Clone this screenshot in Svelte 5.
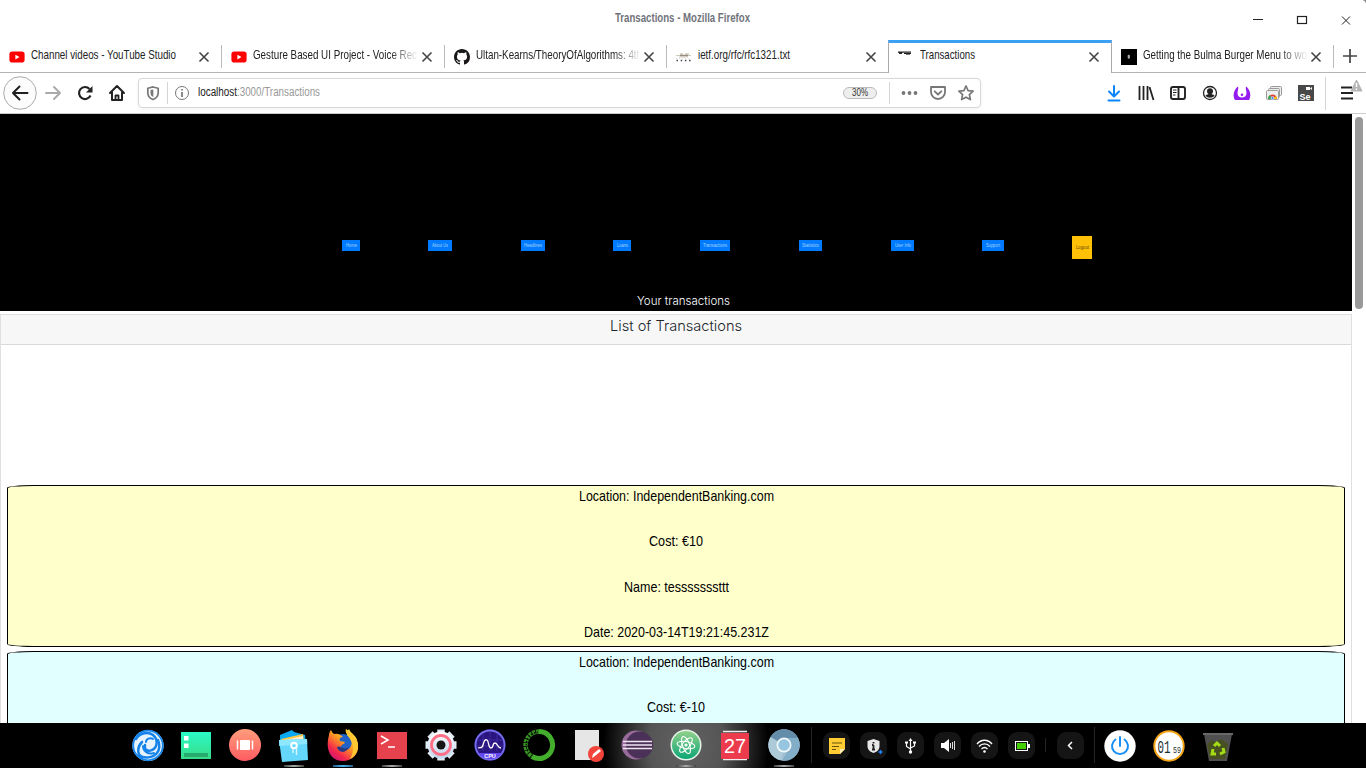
<script>
  const tabs = [
    { title: 'Channel videos - YouTube Studio', w: 145, icon: 'yt' },
    { title: 'Gesture Based UI Project - Voice Rec', w: 164, icon: 'yt', fade: true },
    { title: 'Ultan-Kearns/TheoryOfAlgorithms: 4th', w: 166, icon: 'gh', fade: true },
    { title: 'ietf.org/rfc/rfc1321.txt', w: 92, icon: 'ietf' },
    { title: 'Transactions', w: 55, icon: 'tx', active: true },
    { title: 'Getting the Bulma Burger Menu to wo', w: 164, icon: 'bulma', fade: true }
  ];
  const nav = [
    { t: 'Home', w: 18, tw: 11, gap: 0 }, { t: 'About Us', w: 24, tw: 16, gap: 68 }, { t: 'Headlines', w: 24, tw: 18, gap: 69 },
    { t: 'Loans', w: 18, tw: 11, gap: 68 }, { t: 'Transactions', w: 30, tw: 24, gap: 69 }, { t: 'Statistics', w: 23, tw: 17, gap: 69 },
    { t: 'User Info', w: 23, tw: 16, gap: 69 }, { t: 'Support', w: 22, tw: 14, gap: 68 }
  ];
  const rows = [
    [['Location: IndependentBanking.com', 195], ['Cost: €10', 54], ['Name: te' + 's'.repeat(7) + 'ttt', 105], ['Date: 2020-03-14T19:21:45.231Z', 185]],
    [['Location: IndependentBanking.com', 195], ['Cost: €-10', 58]]
  ];
  const apps = ['deepin', 'multi', 'store', 'files', 'firefox', 'term', 'gear', 'cpu', 'conda', 'edit', 'eclipse', 'atom', 'cal', 'chromium'];
  const running = { files: 'grey', firefox: 'blue', term: 'grey', atom: 'grey', chromium: 'grey' };
  const tray = ['note', 'shield', 'usb', 'sound', 'wifi', 'battery'];
</script>

{#snippet label(text, w, h, base, cls)}
  <svg class="label {cls}" width={w} height={h}><text x="0" y={base} textLength={w} lengthAdjust="spacingAndGlyphs">{text}</text></svg>
{/snippet}

{#snippet cross()}
  <svg class="cross" width="12" height="12" viewBox="0 0 12 12"><path d="M1.5 1.5l9 9M10.5 1.5l-9 9" /></svg>
{/snippet}

{#snippet favicon(k)}
  <svg width="16" height="16" viewBox="0 0 16 16">
    {#if k === 'yt'}
      <rect x="0.4" y="2.6" width="15.2" height="11" rx="2.8" fill="#f00" /><path d="M6.4 5.8v4.6L10.5 8.1z" fill="#fff" />
    {:else if k === 'gh'}
      <path fill="#191717" d="M8 0C3.58 0 0 3.58 0 8c0 3.54 2.29 6.53 5.47 7.59.4.07.55-.17.55-.38 0-.19-.01-.82-.01-1.49-2.01.37-2.53-.49-2.69-.94-.09-.23-.48-.94-.82-1.13-.28-.15-.68-.52-.01-.53.63-.01 1.08.58 1.23.82.72 1.21 1.87.87 2.33.66.07-.52.28-.87.51-1.07-1.78-.2-3.64-.89-3.64-3.95 0-.87.31-1.59.82-2.15-.08-.2-.36-1.02.08-2.12 0 0 .67-.21 2.2.82a7.6 7.6 0 0 1 4 0c1.53-1.04 2.2-.82 2.2-.82.44 1.1.16 1.92.08 2.12.51.56.82 1.27.82 2.15 0 3.07-1.87 3.75-3.65 3.95.29.25.54.73.54 1.48 0 1.07-.01 1.93-.01 2.2 0 .21.15.46.55.38A8.01 8.01 0 0 0 16 8c0-4.42-3.58-8-8-8z" />
    {:else if k === 'ietf'}
      <path d="M0 6.5h15M3 8h9" stroke="#cfc9bb" stroke-width="1.2" /><path d="M4 5h3M9 5h4" stroke="#b7b0a0" /><path d="M4 6.500h8" stroke="#978e7e" stroke-width="1.500" />
      <path d="M.5 11.5h15" stroke="#444" stroke-width="1.5" stroke-dasharray="1.5 2.7" /><path d="M0 9.7h15" stroke="#ddd" stroke-dasharray="1 2" />
    {:else if k === 'tx'}
      <path d="M0 3.200h13M1 4.300h3M6 4.500h7" stroke="#222" stroke-width="1.200" /><path d="M8 5.500h4" stroke="#777" />
    {:else}
      <rect width="16" height="16" fill="#000" /><rect x="6.700" y="5.800" width="2.200" height="4" rx="1" fill="#aaa" />
    {/if}
  </svg>
{/snippet}

{#snippet app(k)}
  <svg class="app" width="34" height="36" viewBox="0 0 34 36">
    {#if k === 'deepin'}
      <g transform="translate(1 0)"><circle cx="17" cy="17.500" r="15.6" fill="#e7f3ff" /><circle cx="17" cy="17.500" r="14.8" fill="none" stroke="#1686ec" stroke-width="1.8" />
      <g fill="none" stroke="#1583e9" stroke-width="2.5" stroke-linecap="round">
        <path d="M5 11c4-6 12-8 17-4 6 5 4 13-1 15-4 2-8 0-7-5" /><path d="M11 30c-6-5-4-12 0-16" /><path d="M8 27c5 4 14 3 18-2 3-4 3-8 1-13" /><path d="M15 14c0-3 4-5 7-3M12 18c0 5 5 9 11 7" stroke-width="2" />
      </g></g>
    {:else if k === 'multi'}
      <defs><linearGradient id="mg" x2="0" y2="1"><stop stop-color="#2bfac7" /><stop offset="1" stop-color="#37dc86" /></linearGradient></defs>
      <rect x="2" y="4" width="30" height="27" fill="url(#mg)" /><path d="M5 8h4.5v4.500H5zM5 15.500h4.500v4.500H5z" fill="#fff" /><rect x="5" y="25" width="24" height="4" fill="#27ab6c" />
    {:else if k === 'store'}
      <defs><linearGradient id="sg" x2="0" y2="1"><stop stop-color="#ff9d7d" /><stop offset="1" stop-color="#ff5c60" /></linearGradient></defs>
      <circle cx="17" cy="17" r="16" fill="url(#sg)" /><rect x="12" y="12" width="10" height="10" rx=".7" fill="#fff" /><path d="M9.500 12.500v9M24.500 12.500v9" stroke="#fff" stroke-width="1.500" />
    {:else if k === 'files'}
      <path d="M3 7L15 2l2 2 11 3 1 10H3z" fill="#0aa9f3" /><path d="M4 11l22-5 1 7H5z" fill="#ffc843" /><path d="M4 13l22-5v5z" fill="#fff1d0" />
      <path d="M2 12l28-1 1 21-26 2z" fill="#65d7fa" /><path d="M2 12l28-1 .2 5-28 2z" fill="#8de8ff" />
      <circle cx="17" cy="17.500" r="2.800" fill="none" stroke="#fff" stroke-width="2" /><path d="M16 21v4M19.500 20v7" stroke="#d3f5ff" stroke-width="1.500" />
    {:else if k === 'firefox'}
      <defs><linearGradient id="fg" x1=".9" x2=".15" y2="1"><stop stop-color="#fff14d" /><stop offset=".45" stop-color="#ff9b22" /><stop offset=".75" stop-color="#f3284c" /><stop offset="1" stop-color="#c7107c" /></linearGradient></defs>
      <circle cx="17" cy="18" r="12" fill="#2062c8" /><path d="M3 7c0-2 1-4 2-5 1 2 2 4 4 4 3-1 6 1 8 3-3 0-4 2-3 4l5 1c-1 3-4 2-4 5 1 4 8 4 10-1 2-5-1-9-4-11 0-3 1-5 2-6 2 5 7 6 8 11 4 12-3 21-14 21C4 33-1 21 3 7z" fill="url(#fg)" />
      <path d="M20 1c6 4 13 10 12 19-1 5-4 9-8 11 5-9 4-15-2-23-2-3-3-5-2-7z" fill="#ffc833" />
      <path d="M11 19c4-2 6 4 12 0-2 6-10 7-12 0z" fill="#273a87" />
    {:else if k === 'term'}
      <rect x="2" y="4" width="30" height="27" fill="#e5424e" /><path d="M6 8l7 4-7 4M13 19h7" fill="none" stroke="#fff" stroke-width="1.500" />
    {:else if k === 'gear'}
      <defs><linearGradient id="gg" x2="0" y2="1"><stop stop-color="#fff" /><stop offset="1" stop-color="#bed5ec" /></linearGradient></defs>
      <g stroke="#dfeaf5" stroke-width="7.500"><path d="M17 1.500v31M1.500 17h31M6 6l22 22M6 28L28 6" /></g><circle cx="17" cy="17" r="13.500" fill="url(#gg)" /><circle cx="17" cy="17" r="9.500" fill="none" stroke="#ff7088" stroke-width="2.800" /><circle cx="17" cy="17" r="4.500" fill="#151515" />
    {:else if k === 'cpu'}
      <circle cx="17" cy="17" r="15.700" fill="#291480" /><circle cx="17" cy="17" r="14.500" fill="none" stroke="#7670ec" stroke-width="1.800" /><path d="M5 25a15 15 0 0 0 24 0z" fill="#6545ed" /><path d="M17 3v20M10 5v18M24 5v18M4 12h26M4 18h26" stroke="#4730a8" stroke-width=".7" />
      <path d="M5 20c3-1 4 1 5-3s2-6 4-5 1 8 4 8 1-5 4-5 2 5 6 5" fill="none" stroke="#fff" stroke-width="1.300" /><text x="17" y="29.500" text-anchor="middle" font-size="5.500" font-weight="bold" fill="#fff">CPU</text>
    {:else if k === 'conda'}
      <path d="M17 3.500a13.500 13.500 0 1 1-7 25" fill="none" stroke="#43ae2c" stroke-width="5" /><path d="M17 3.500a13.500 13.500 0 0 0-7 25" fill="none" stroke="#379323" stroke-width="4.500" stroke-dasharray="3 .8" /><path d="M16 4a13 13 0 0 0-9 21" fill="none" stroke="#050505" stroke-width="1.200" stroke-dasharray="1.500 1.500" />
    {:else if k === 'edit'}
      <rect x="4" y="2" width="24" height="30" fill="#e6e6e6" /><circle cx="25" cy="26" r="8" fill="#f2443b" /><path d="M21 30l1-4 6-5 2 2-6 5z" fill="#fff" />
    {:else if k === 'eclipse'}
      <circle cx="16" cy="17" r="14.500" fill="#976b9a" /><circle cx="19.500" cy="17" r="13.500" fill="#4b3158" /><path d="M3 13.500h29M3 17h29M3 20.500h29" stroke="#efe5f0" stroke-width="1.600" />
    {:else if k === 'atom'}
      <defs><linearGradient id="ag" x2="0" y2="1"><stop stop-color="#92d18b" /><stop offset="1" stop-color="#0ca675" /></linearGradient></defs>
      <circle cx="17" cy="17" r="15.500" fill="#e7f3e8" /><circle cx="17" cy="17" r="14" fill="url(#ag)" /><g fill="none" stroke="#fff" stroke-width="1.100"><ellipse cx="17" cy="17" rx="3.500" ry="9" transform="rotate(-20 17 17)" /><ellipse cx="17" cy="17" rx="3.500" ry="9" transform="rotate(40 17 17)" /><ellipse cx="17" cy="17" rx="3.500" ry="9" transform="rotate(100 17 17)" /></g><circle cx="17" cy="17" r="1.600" fill="#fff" />
    {:else if k === 'cal'}
      <path d="M5 3.500h24M5 31.500h24" stroke="#eee" stroke-width="1.300" /><rect x="3" y="5" width="28" height="26" fill="#ec3b4c" /><text x="17" y="24.500" text-anchor="middle" font-size="20" textLength="22" lengthAdjust="spacingAndGlyphs" fill="#fff">27</text>
    {:else}
      <circle cx="17" cy="17" r="15.700" fill="#9fbed2" /><path d="M17 17L3.500 9a15.700 15.700 0 0 1 27 0z" fill="#648dab" /><path d="M17 17L3.500 9a15.700 15.700 0 0 0 11 23.500z" fill="#adcad9" /><path d="M18 10h13a15.700 15.700 0 0 1-16 22.700l7-12z" fill="#83aeca" /><circle cx="17" cy="17" r="7.500" fill="#f2f7fa" /><circle cx="17" cy="17" r="5.800" fill="#95c5df" />
    {/if}
  </svg>
{/snippet}

{#snippet trayIcon(k)}
  <svg width="27" height="27" viewBox="0 0 27 27" fill="none" stroke="#fff">
    {#if k === 'note'}
      <path d="M6 6h16v11l-5 5H6z" fill="#ffcc33" stroke="none" /><path d="M17 22v-5h5z" fill="#fff0b1" stroke="none" /><path d="M9 11h10M9 14.500h7M9 17.500h4" stroke="#6b5209" />
    {:else if k === 'shield'}
      <path d="M13.500 7l6 2v5c0 4-3 6-6 7-3-1-6-3-6-7V9z" fill="#e7e7e7" stroke="none" /><path d="M13.500 10v1.500M13.500 13v4M12 13h1.500M12 17.500h3" stroke="#222" stroke-width="1.800" /><path d="M20.500 18v4M18.500 20h4" stroke="#2483ff" stroke-width="1.500" />
    {:else if k === 'usb'}
      <path d="M13.500 8v12M9.500 11v3.500l4 2.500M17.500 11v3l-4 2" stroke-width="1.200" /><path d="M11.500 9l2-3 2 3z" fill="#fff" stroke="none" /><circle cx="13.500" cy="20" r="1.700" fill="#fff" stroke="none" /><path d="M8 9.500h3v2H8zM16 9.500h3v2h-3z" fill="#fff" stroke="none" />
    {:else if k === 'sound'}
      <path d="M7 11h3l5-4v13l-5-4H7z" fill="#fff" stroke="none" /><path d="M16.500 11v5M18.500 10v7M20.500 9v9" stroke="#ddd" />
    {:else if k === 'wifi'}
      <path d="M6 12c4-5 11-5 15 0M8 14.500c3-3.500 8-3.500 11 0M10.500 17c2-2 4-2 6 0" stroke-width="1.300" /><circle cx="13.500" cy="19.500" r="1.300" fill="#fff" stroke="none" />
    {:else}
      <rect x="7.500" y="9.500" width="12" height="9" /><path d="M21 12v4" stroke-width="2" /><rect x="9" y="11" width="9" height="6" fill="#45ce00" stroke="none" />
    {/if}
  </svg>
{/snippet}

<div class="screen">
  <header class="titlebar">
    <div class="caption">{@render label('Transactions - Mozilla Firefox', 135, 18, 13, 'title')}</div>
    <svg class="winbtns" width="110" height="20" viewBox="0 0 110 20" fill="none" stroke="#222"><path d="M1 9.500h10" /><rect x="45.500" y="6.500" width="9" height="7" stroke-width="1.200" /><path d="M90 6.500l8 8M98 6.500l-8 8" /></svg>
    <i class="corner"></i>
  </header>

  <div class="tabs">
    {#each tabs as t}
      <div class="tab" class:active={t.active}>
        <span class="fav">{@render favicon(t.icon)}</span>
        <span class="tabtext" class:fade={t.fade}>{@render label(t.title, t.w, 20, 13, 'tabfont')}</span>
        {@render cross()}
      </div>
    {/each}
    <div class="newtab"><svg width="14" height="14" viewBox="0 0 14 14"><path d="M7 0v14M0 7h14" stroke="#444" stroke-width="1.700" /></svg></div>
  </div>

  <div class="toolbar">
    <svg width="34" height="34" viewBox="0 0 34 34" fill="none"><circle cx="17" cy="17" r="16.300" fill="#fcfcfc" stroke="#aaa" /><path d="M24.500 17H10M16.500 10.500L10 17l6.500 6.500" stroke="#1f1f1f" stroke-width="2" stroke-linecap="round" stroke-linejoin="round" /></svg>
    <svg width="32" height="32" viewBox="0 0 32 32" fill="none" stroke="#aaa" stroke-width="2" stroke-linecap="round" stroke-linejoin="round"><path d="M9 16h14M17 10l6 6-6 6" /></svg>
    <svg width="32" height="32" viewBox="0 0 32 32" fill="none" stroke="#222" stroke-width="2.200"><path d="M21.500 18.500a6 6 0 1 1-1-6.500" /><path d="M23.500 9v6.500h-6.500z" fill="#222" stroke="none" /></svg>
    <svg width="32" height="32" viewBox="0 0 32 32" fill="none" stroke="#222" stroke-width="2" stroke-linejoin="round" stroke-linecap="round"><path d="M9 16l7-7 7 7M11 15.500V23h10v-7.500" /><path d="M14.500 23v-4.500h3V23" stroke-width="1.800" /></svg>
    <div class="urlbar">
      <svg width="28" height="28" viewBox="0 0 28 28" fill="none" stroke="#777" stroke-width="1.700"><path d="M14 8l5.200 1.300V14c0 3.500-2.500 5.500-5.200 6.500-2.700-1-5.200-3-5.200-6.500V9.300z" /><path d="M14.300 10.500v7.500c-2-1-2.800-2-2.800-4v-3z" fill="#777" stroke="none" /></svg>
      <i class="sep s1"></i>
      <svg width="28" height="28" viewBox="0 0 28 28" fill="none" stroke="#777"><circle cx="14" cy="14" r="6.500" /><path d="M14 10v1.500M14 13v5" stroke-width="1.700" /></svg>
      <span class="url">{@render label('localhost', 39, 18, 13, 'host')}{@render label(':3000/Transactions', 83, 18, 13, 'path')}</span>
      <span class="zoom">{@render label('30%', 16, 10, 8, 'zoomfont')}</span>
      <i class="sep s2"></i>
      <svg class="dots" width="18" height="6" viewBox="0 0 18 6" fill="#777"><circle cx="3.500" cy="3" r="1.900" /><circle cx="9.500" cy="3" r="1.900" /><circle cx="15.500" cy="3" r="1.900" /></svg>
      <svg class="pocket" width="18" height="18" viewBox="0 0 18 18" fill="none" stroke="#777" stroke-width="1.800" stroke-linejoin="round" stroke-linecap="round"><path d="M2 3h14v5a7 7 0 0 1-14 0z" /><path d="M5.700 7.300L9 10.500l3.300-3.200" /></svg>
      <svg class="star" width="18" height="18" viewBox="0 0 18 18" fill="none" stroke="#777" stroke-width="1.700" stroke-linejoin="round"><path d="M9 2l2.100 4.600 5 .6-3.700 3.400 1 5L9 13.200l-4.400 2.400 1-5L1.900 7.200l5-.6z" /></svg>
    </div>
    <div class="tools">
      <svg viewBox="0 0 32 32" stroke="#0a84ff" fill="none" stroke-width="2" stroke-linecap="round" stroke-linejoin="round"><path d="M16 9v10M11 14.500l5 5 5-5M10.500 23.500h11" /></svg>
      <svg viewBox="0 0 32 32" stroke="#222" fill="none" stroke-width="1.800"><path d="M9.500 9v14M13.500 9v14M17.500 9v14M19.500 10l4 13" /></svg>
      <svg viewBox="0 0 32 32" stroke="#222" fill="none" stroke-width="1.900"><rect x="9" y="10" width="14" height="12" rx="2" /><path d="M16.500 10v12" /><path d="M11 13h3.500M11 15.500h3.500M11 18h2.500" stroke-width="1" /></svg>
      <svg viewBox="0 0 32 32" fill="#222"><circle cx="16" cy="16" r="6.500" fill="none" stroke="#222" stroke-width="1.300" /><circle cx="16" cy="14.300" r="3" /><path d="M11.500 18.500c2-2 7-2 9 0-2 3-7 3-9 0z" /></svg>
      <svg viewBox="0 0 32 32" fill="#951cf0"><path d="M12 9.500c-4.500 3-5.500 10-3 13.500h14c2.500-3.500 1.500-10.500-3-13.500-.8 2 .5 4.500.5 6.500 0 3-2 4.500-4.500 4.500s-4.500-1.500-4.500-4.500c0-2 1.300-4.500.5-6.500z" /><circle cx="16" cy="17.800" r="1.300" /></svg>
      <svg viewBox="0 0 32 32" fill="#eee" stroke="#999"><rect x="12.500" y="9.500" width="11" height="9" rx="1" /><rect x="10.500" y="11.500" width="11" height="9" rx="1" /><rect x="8.500" y="13.500" width="12" height="9" rx="1" /><path d="M10 22a4.500 4.500 0 0 1 9 0z" fill="#e34133" stroke="none" /><path d="M10 22a4.500 4.500 0 0 1 2-4l2.500 4z" fill="#36a853" stroke="none" /><path d="M19 22a4.500 4.500 0 0 0-1-3l-3.500 3z" fill="#fbbc05" stroke="none" /><circle cx="14.500" cy="21" r="1.500" fill="#4285f4" stroke="#fff" stroke-width=".6" /></svg>
      <svg viewBox="0 0 32 32"><rect x="8" y="8" width="16" height="16" fill="#484848" /><text x="9.500" y="22.500" font-size="9.500" font-weight="bold" textLength="11" lengthAdjust="spacingAndGlyphs" fill="#fff">Se</text><rect x="16" y="10" width="4" height="3" fill="#fff" /><path d="M20 11.500l2-1.500v3z" fill="#fff" /></svg>
    </div>
    <i class="sep s3"></i>
    <svg class="menu" width="40" height="34" viewBox="0 0 40 34"><path d="M15 11.500h11M15 17h12M15 22.500h12" stroke="#222" stroke-width="2" /><path d="M30.500 4l5.500 11H25z" fill="#b5b5b5" stroke="#b5b5b5" stroke-linejoin="round" /><path d="M30.500 7v4M30.500 12.500v1.500" stroke="#fff" stroke-width="1.500" /></svg>
  </div>

  <div class="viewport">
    <main>
      <div class="hero">
        <nav>
          {#each nav as n}<span class="btn" style="width:{n.w}px;margin-left:{n.gap}px">{@render label(n.t, n.tw, 6, 3.500, 'navfont')}</span>{/each}
          <span class="btn logout">{@render label('Logout', 13, 6, 3.500, 'outfont')}</span>
        </nav>
        <div class="sub">{@render label('Your transactions', 93, 16, 11, 'subfont')}</div>
      </div>
      <section class="card">
        <div class="cardhead">{@render label('List of Transactions', 132, 20, 16, 'headfont')}</div>
        <div class="list">
          {#each rows as r, i}
            <article class:blue={i % 2 === 1}>
              {#each r as [t, w]}<p>{@render label(t, w, 21, 15, 'rowfont')}</p>{/each}
            </article>
          {/each}
        </div>
      </section>
    </main>
    <aside><i></i></aside>
  </div>

  <footer>
    {#each apps as a}
      <div class="slot">{@render app(a)}{#if running[a]}<i class="run {running[a]}"></i>{/if}</div>
    {/each}
    <i class="dsep d1"></i>
    <div class="tray">{#each tray as t}<div class="tslot"><span class="pill">{@render trayIcon(t)}</span></div>{/each}</div>
    <i class="dsep d2"></i>
    <span class="pill more"><svg width="27" height="27" viewBox="0 0 27 27"><path d="M15 10l-3.500 3.500L15 17" fill="none" stroke="#fff" stroke-width="1.500" /></svg></span>
    <i class="dsep d3"></i>
    <div class="slot"><svg class="app" width="34" height="36" viewBox="0 0 34 36" fill="none" stroke="#198ff5" stroke-width="2"><circle cx="17" cy="18" r="15.700" fill="#fff" stroke="none" /><path d="M17 9v9M12.500 11.500a8 8 0 1 0 9 0" stroke-linecap="round" /></svg></div>
    <div class="slot"><svg class="app" width="34" height="36" viewBox="0 0 34 36"><circle cx="17" cy="18" r="14.700" fill="#fff" stroke="#f5a416" stroke-width="2" /><g class="digits"><text x="5.500" y="24.500" font-size="18" textLength="13" lengthAdjust="spacingAndGlyphs">01</text><text x="21" y="25" font-size="9.500" textLength="8" lengthAdjust="spacingAndGlyphs">59</text></g></svg></div>
    <div class="slot"><svg class="app" width="34" height="36" viewBox="0 0 34 36"><path d="M3 6h28l-5 27H8z" fill="#505050" /><path d="M2 5h30v2H2z" fill="#686868" /><path d="M6 16l5-4 4 2 5-3 7 5-3 15H9z" fill="#465020" /><g fill="none" stroke="#a4dc16" stroke-width="3"><path d="M13 18l3-3 3 3M22 20l1 4-4 2M15 26h-4l1-5" /></g></svg></div>
  </footer>
</div>

<style>
  :global(body) { overflow: hidden; background: #fff; }
  .screen { width: 1366px; height: 768px; display: flex; flex-direction: column; font-family: "Liberation Sans", Arial, sans-serif; background: #fff; overflow: hidden; }
  svg { display: block; flex: none; }
  i { display: block; flex: none; }
  .label { overflow: visible; }
  .titlebar { height: 40px; display: flex; box-sizing: border-box; padding: 9px 0 0 615px; position: relative; }
  .caption { width: 637px; }
  .winbtns { margin-top: 1px; }
  .corner { position: absolute; right: 0; top: 0; width: 3px; height: 3px; background: radial-gradient(circle at 0 100%, #fff 2px, #888 3px); }
  .title { font-size: 12px; font-weight: bold; fill: #71747b; }
  .tabs { height: 33px; display: flex; box-sizing: border-box; background: linear-gradient(#b4b4b4, #b4b4b4) 0 100% / 100% 1px no-repeat; }
  .tab { width: 222.300px; height: 33px; box-sizing: border-box; display: flex; padding: 6px 12px 0 9px; background: linear-gradient(#bbb, #bbb) 100% 5px / 1px 23px no-repeat; }
  .tab.active { background: #fff; border: 1px solid #aaa; border-top: 3px solid #3aa0f4; border-bottom: 0; padding-top: 3px; padding-left: 9px; padding-right: 11px; width: 224px; margin-left: -1px; }
  .tab:nth-child(4) { background: none; }
  .fav { margin: 3px 6px 0 0; }
  .tabtext { flex: 1; min-width: 0; height: 22px; margin-right: 8px; }
  .tabtext.fade { margin-right: 0; flex: 0 0 167px; mask-image: linear-gradient(90deg, #000 82%, transparent 99%); }
  .fade + :global(.cross) { margin-left: auto; }
  .tabfont { font-size: 12.800px; fill: #222; }
  .cross { margin-top: 5px; stroke: #444; stroke-width: 1.600; }
  .newtab { flex: 1; display: flex; padding: 9px 0 0 9px; }
  .toolbar { height: 41px; box-sizing: border-box; border-bottom: 1px solid #ccc; display: flex; align-items: center; padding-left: 3px; }
  .urlbar { box-sizing: border-box; width: 843px; height: 30px; margin-left: 5px; border: 1px solid #d6d6db; border-radius: 4px; display: flex; align-items: center; box-shadow: 0 1px 4px #0000000d; }
  .sep { width: 1px; height: 22px; background: #d5d5d5; }
  .url { width: 645px; margin-left: 2px; height: 20px; display: flex; }
  .url .label { font-size: 12.300px; }
  .host { fill: #222; }
  .path { fill: #999; }
  .zoom { box-sizing: border-box; width: 34px; height: 12px; border: 1px solid #bbb; border-radius: 6px; background: #eee; display: flex; justify-content: center; align-items: flex-start; }
  .zoomfont { font-size: 10px; fill: #333; }
  .s2 { margin-left: 12px; }
  .dots { margin-left: 10px; }
  .pocket { margin-left: 11px; }
  .star { margin-left: 10px; }
  .tools { margin-left: 117px; display: flex; }
  .tools svg { width: 32px; height: 32px; }
  .s3 { height: 33px; margin-left: 3px; }
  .viewport { height: 609px; display: flex; }
  main { width: 1352px; height: 609px; overflow: hidden; }
  aside { width: 14px; background: #fff; padding: 3px 0 0 3px; box-sizing: border-box; }
  aside i { width: 8px; height: 192px; border-radius: 4px; background: #999; }
  .hero { height: 197px; background: #000; box-sizing: border-box; padding-top: 122px; }
  nav { height: 23px; margin-left: 342px; display: flex; }
  .btn { height: 11px; margin-top: 4px; background: #007bff; display: flex; align-items: center; justify-content: center; }
  .logout { width: 20px; height: 23px; margin: 0 0 0 68px; background: #ffc107; }
  .navfont { font-size: 4.500px; fill: #a8d2ff; }
  .outfont { font-size: 4.500px; fill: #5c460a; }
  .sub { margin: 35px 0 0 636.500px; }
  .subfont { font-family: Inter, sans-serif; font-weight: 300; font-size: 11.200px; fill: #fff; }
  .card { margin-top: 3px; height: 420px; border: 1px solid #dfdfdf; }
  .cardhead { height: 29px; background: #f7f7f7; border-bottom: 1px solid #d9d9d9; display: flex; justify-content: center; }
  .headfont { font-family: Inter, sans-serif; font-weight: 300; font-size: 14.500px; fill: #212529; }
  .list { padding: 140px 6px 0; }
  article { height: 162px; box-sizing: border-box; border: 1px solid #000; border-radius: 26px / 3px; background: #ffffcc; margin-bottom: 4px; overflow: hidden; }
  article.blue { background: #e2ffff; }
  p { margin: 0; height: 45.300px; display: flex; justify-content: center; }
  .rowfont { font-size: 14.800px; fill: #000; }
  footer { height: 45px; box-sizing: border-box; padding-left: 122.500px; display: flex; background: radial-gradient(ellipse 83px 100px at 686px 22px, #626262, #555 45%, #000 100%), #000; }
  .slot { width: 49px; height: 45px; display: flex; flex-direction: column; align-items: center; }
  .app { margin-top: 5px; }
  .run { width: 20px; height: 2px; margin-top: 1px; background: linear-gradient(90deg, #444, #aaa, #444); }
  .run.blue { background: linear-gradient(90deg, #255b85, #48b5f5, #255b85); }
  .dsep { width: 1px; background: #252525; }
  .d1, .d3 { height: 36px; margin-top: 4px; }
  .d1 { margin-left: 2.500px; margin-right: 6px; }
  .d2 { height: 14px; margin: 15px 11px 0 5px; }
  .tray { display: flex; }
  .tslot { width: 37px; display: flex; justify-content: center; }
  .pill { width: 27px; height: 27px; margin-top: 9px; border-radius: 9px; background: #151515; flex: none; }
  .d3 { margin-left: 10px; margin-right: 0; }
  .digits { font-family: "Liberation Mono", monospace; fill: #17302f; }
</style>
